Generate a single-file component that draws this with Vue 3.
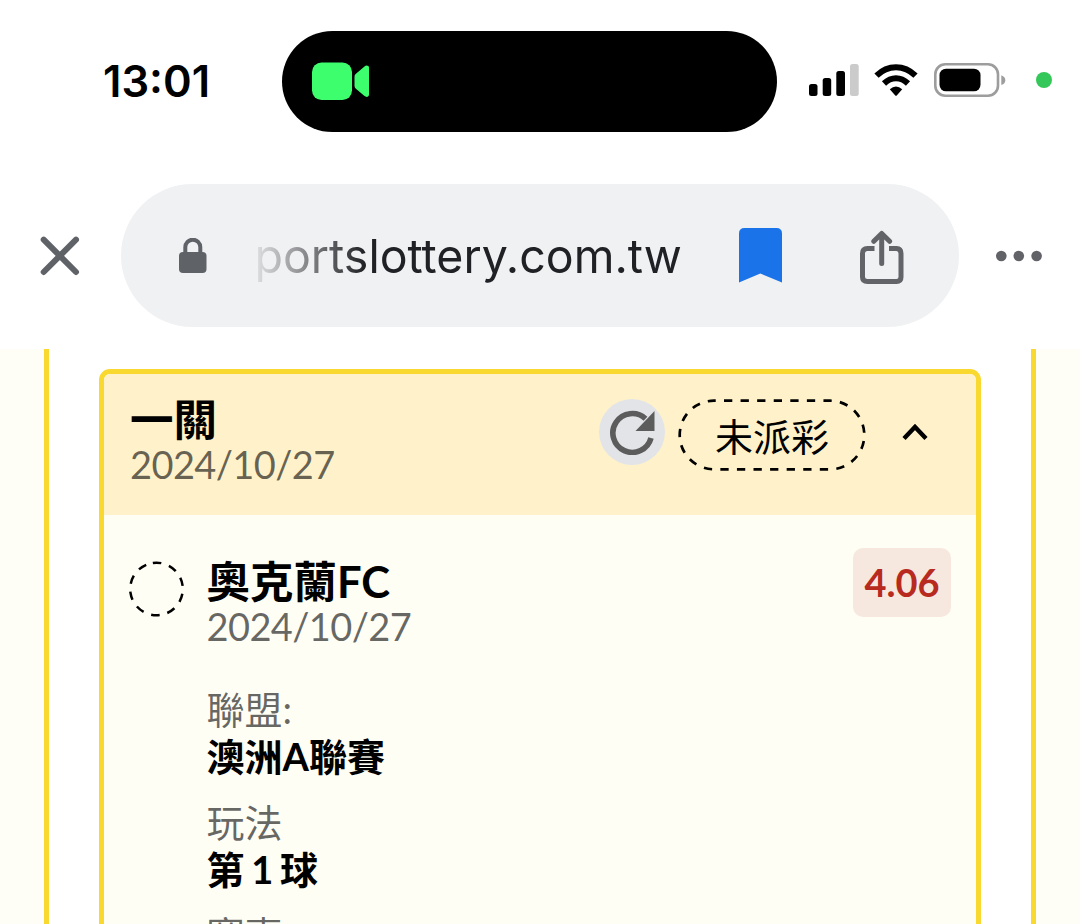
<script setup>
const title = { name: '一關', date: '2024/10/27', status: '未派彩' }
const match = { name: '奧克蘭FC', date: '2024/10/27', odds: '4.06' }
const details = [
  { label: '聯盟:', value: '澳洲A聯賽' },
  { label: '玩法', value: '第 1 球' },
  { label: '賽事', value: '' },
]
</script>

<template>
  <div class="screen">
    <header class="status">
      <time class="clock">13:01</time>
      <div class="island">
        <svg width="58" height="38" viewBox="0 0 58 38" fill="#3dff6e">
          <rect x="0" y="0.500" width="40" height="37.500" rx="9.500" />
          <path d="M42.500 15c0-1.600.5-2.500 1.700-3.600l8.300-7c2-1.500 4.500-.8 4.500 1.600v26.500c0 2.400-2.500 3.100-4.500 1.600l-8.300-7c-1.200-1.100-1.700-2-1.700-3.600z" />
        </svg>
      </div>
      <svg class="signal" width="50" height="33" viewBox="0 0 50 33">
        <rect x="0" y="20" width="8.500" height="12" rx="2.500" />
        <rect x="13.700" y="14" width="8.500" height="18" rx="2.500" />
        <rect x="27.300" y="7" width="8.700" height="25" rx="2.500" />
        <rect x="41" y="0" width="8.700" height="32" rx="2.500" fill="#cbcbcb" />
      </svg>
      <svg class="wifi" width="44" height="33" viewBox="0 0 44 33">
        <path d="M2.500 11.700Q11 3.300 22 3.300T41.500 11.700" fill="none" stroke="#000" stroke-width="6" />
        <path d="M10 19.500Q15.500 14.200 22 14.200T34 19.500" fill="none" stroke="#000" stroke-width="6" />
        <path d="M15.800 25.300Q22 19.500 28.200 25.300L23 31.200Q22 32.300 21 31.200z" />
      </svg>
      <svg class="battery" width="72" height="34" viewBox="0 0 72 34">
        <rect x="1.300" y="1.300" width="62.700" height="31.400" rx="10" fill="none" stroke="#9d9d9d" stroke-width="2.600" />
        <rect x="5.500" y="5.700" width="41" height="22.600" rx="6.500" />
        <path d="M67.300 12.300q4 1.600 4 4.900t-4 4.900z" fill="#9d9d9d" />
      </svg>
      <i class="camera-dot"></i>
    </header>

    <nav class="toolbar">
      <svg class="close" width="40" height="40" viewBox="0 0 40 40" stroke="#5f6368" stroke-width="6" stroke-linecap="round">
        <path d="M3.700 3.700 36 36M36 3.700 3.700 36" />
      </svg>
      <div class="address">
        <svg class="lock" width="28" height="36" viewBox="0 0 28 36">
          <rect x="0" y="14" width="27.500" height="21" rx="4" fill="#5f6368" />
          <path d="M6.300 16V9.200a7.500 7.500 0 0 1 15 0V16" fill="none" stroke="#5f6368" stroke-width="4" />
        </svg>
        <span class="url">portslottery.com.tw</span>
        <svg class="bookmark" width="43" height="55" viewBox="0 0 43 55">
          <path d="M0 54.500V5.500Q0 0 5.500 0h32Q43 0 43 5.500v49L21.300 45.500z" fill="#1a73e8" />
        </svg>
        <svg class="share" width="44" height="56" viewBox="0 0 44 56" fill="none" stroke="#626468" stroke-width="5">
          <path d="M14.500 18.500H7.500Q2.500 18.500 2.500 23.500V47Q2.500 51.500 7.500 51.500h29Q41 51.500 41 47V23.500Q41 18.500 36.500 18.500H29" />
          <path d="M21.700 33.500V4M13.800 11.300l7.900-7.900 7.900 7.900" stroke-linecap="round" stroke-linejoin="round" />
        </svg>
      </div>
      <svg class="more" width="46" height="12" viewBox="0 0 46 12" fill="#626368">
        <circle cx="5.300" cy="6" r="5.300" />
        <circle cx="22.800" cy="6" r="5.300" />
        <circle cx="40.600" cy="6" r="5.300" />
      </svg>
    </nav>

    <main class="page">
      <section class="sheet">
        <article class="card">
          <div class="card-head">
            <div class="title">
              <h2>{{ title.name }}</h2>
              <p class="date">{{ title.date }}</p>
            </div>
            <div class="refresh">
              <svg width="46" height="46" viewBox="0 0 46 46">
                <path d="M42 29A19.400 19.400 0 1 1 36.500 9.800" fill="none" stroke="#5c5c5c" stroke-width="5.600" />
                <path d="M45.500 2v20H26.500z" fill="#5c5c5c" />
              </svg>
            </div>
            <div class="pill">
              <svg width="188" height="72" viewBox="0 0 188 72">
                <rect x="1.700" y="1.700" width="184.600" height="68.600" rx="34.300" fill="none" stroke="#000" stroke-width="2.700" stroke-dasharray="8.300 8.275" stroke-dashoffset="-10" />
              </svg>
              <span>{{ title.status }}</span>
            </div>
            <svg class="chevron" width="28" height="18" viewBox="0 0 28 18">
              <path d="M3 15.500 14 4 25 15.500" fill="none" stroke="#000" stroke-width="4.400" />
            </svg>
          </div>

          <div class="card-body">
            <svg class="pending" width="56" height="56" viewBox="0 0 56 56">
              <circle cx="27.500" cy="28" r="26.300" fill="none" stroke="#000" stroke-width="2.500" stroke-dasharray="8.500 8.025" transform="rotate(-98 27.500 28)" />
            </svg>
            <div class="info">
              <h3>{{ match.name }}</h3>
              <p class="date">{{ match.date }}</p>
              <dl>
                <div v-for="item in details" :key="item.label" class="detail">
                  <dt>{{ item.label }}</dt>
                  <dd>{{ item.value }}</dd>
                </div>
              </dl>
            </div>
            <span class="odds">{{ match.odds }}</span>
          </div>
        </article>
      </section>
    </main>
  </div>
</template>

<style>
body {
  background: #fff;
}
</style>

<style scoped>
.screen {
  width: 1080px;
  height: 924px;
  overflow: hidden;
  display: flex;
  flex-direction: column;
  background: #fff;
  font-family: Lato, "Noto Sans CJK TC", sans-serif;
  color: #000;
}
svg {
  display: block;
  flex: none;
}
h2, h3, p, dl, dt, dd {
  margin: 0;
}

.status {
  flex: none;
  height: 162px;
  display: flex;
  align-items: center;
  box-sizing: border-box;
  padding-left: 103px;
}
.clock {
  width: 179px;
  font: 600 43.500px/60px Inter, sans-serif;
}
.island {
  width: 495px;
  height: 101px;
  border-radius: 51px;
  background: #000;
  display: flex;
  align-items: center;
  box-sizing: border-box;
  padding-left: 30px;
}
.signal { margin: 0 0 2px 32px; }
.wifi { margin: 0 0 2px 14.500px; }
.battery { margin: 0 0 2px 16px; }
.camera-dot {
  width: 16px;
  height: 16px;
  border-radius: 50%;
  background: #34c759;
  margin: 0 0 2px 30.500px;
}

.toolbar {
  flex: none;
  height: 187px;
  display: flex;
  align-items: center;
  box-sizing: border-box;
  padding-left: 40px;
}
.address {
  width: 838px;
  height: 143px;
  margin-left: 41px;
  border-radius: 72px;
  background: #f0f1f3;
  display: flex;
  align-items: center;
  box-sizing: border-box;
  padding-left: 57.500px;
}
.url {
  width: 484.500px;
  margin-left: 48px;
  font: 400 46.500px/60px Inter, sans-serif;
  letter-spacing: 0;
  white-space: nowrap;
  color: #202124;
  -webkit-mask-image: linear-gradient(90deg, rgba(0, 0, 0, 0.08) 0, rgba(0, 0, 0, 0.45) 45px, #000 110px);
  mask-image: linear-gradient(90deg, rgba(0, 0, 0, 0.08) 0, rgba(0, 0, 0, 0.45) 45px, #000 110px);
}
.share { margin: 4px 0 0 78px; }
.more { margin-left: 37px; }

.page {
  flex: 1;
  min-height: 0;
  padding: 0 44px;
  background: #fffef6;
}
.sheet {
  height: 100%;
  box-sizing: border-box;
  padding: 20px 50px 0;
  border: solid #f9d92f;
  border-width: 0 5px;
  background: #fff;
}
.card {
  height: 620px;
  box-sizing: border-box;
  border: 5px solid #f9d92f;
  border-radius: 11px;
  background: #fffef5;
  overflow: hidden;
}
.card-head {
  height: 141px;
  box-sizing: border-box;
  padding: 22px 0 0 26px;
  display: flex;
  align-items: flex-start;
  background: #fff2ca;
}
.title { width: 469px; }
h2, h3 {
  font-size: 43.500px;
  line-height: 46px;
  font-weight: 700;
}
.date {
  font-size: 38px;
  line-height: 44px;
  letter-spacing: -0.600px;
  color: rgba(0, 0, 0, 0.6);
}
.refresh {
  width: 66px;
  height: 66px;
  margin-top: 3px;
  border-radius: 50%;
  background: #e2e4e7;
  display: flex;
  align-items: center;
  justify-content: center;
}
.pill {
  width: 188px;
  height: 72px;
  margin: 3px 0 0 13px;
  display: grid;
  place-items: center;
}
.pill > * { grid-area: 1 / 1; }
.pill span {
  font-size: 38px;
  line-height: 56px;
  padding-top: 2px;
}
.chevron { margin: 27px 0 0 35px; }

.card-body {
  display: flex;
  align-items: flex-start;
  padding: 33px 25px 0 25px;
}
.pending { margin-top: 13px; }
.info {
  flex: 1;
  margin-left: 21.500px;
  padding-top: 10px;
}
dl { margin-top: 38px; }
.detail {
  height: 112.500px;
  font-size: 38px;
  line-height: 47px;
}
dt { color: rgba(0, 0, 0, 0.6); }
dd {
  font-weight: 700;
  word-spacing: -2.500px;
}
.odds {
  width: 98px;
  height: 69px;
  margin-top: -0.500px;
  border-radius: 10px;
  background: #f7e8df;
  color: #b82a20;
  font-size: 38px;
  line-height: 69px;
  font-weight: 700;
  text-align: center;
}
</style>
